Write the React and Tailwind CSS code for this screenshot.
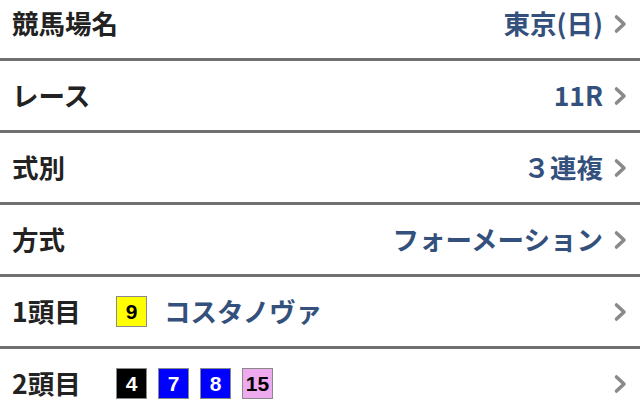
import React from "react";

const Chevron = () => (
  <svg width="15" height="20" viewBox="0 0 15 20" className="shrink-0">
    <path d="M3.5 3 L11 10 L3.5 17" fill="none" stroke="#8a8a8a" strokeWidth="3.6" strokeLinecap="round" strokeLinejoin="round" />
  </svg>
);

const Badge = ({ n, bg, fg }) => (
  <div
    className={`w-[31px] h-[31px] flex items-center justify-center border border-[#8a8a8a] text-[21px] font-bold leading-none ${bg} ${fg}`}
    style={{ fontFamily: '"Liberation Sans", Arial, sans-serif' }}
  >
    {n}
  </div>
);

const Row = ({ label, value, children }) => (
  <div className="h-[72px] flex items-center border-b-[3px] border-[#707070] pl-[12px] pr-[12px]">
    <div className="w-[104px] shrink-0 whitespace-nowrap text-[26.5px] font-bold text-[#222222] leading-none">{label}</div>
    <div className="flex-1 flex items-center min-w-0">{children}</div>
    {value && <div className="whitespace-nowrap text-[26.5px] font-bold text-[#34507c] leading-none mr-[10px]">{value}</div>}
    {!value && <div className="mr-[10px]" />}
    <Chevron />
  </div>
);

export default function App() {
  return (
    <div
      className="w-[640px] h-[400px] overflow-hidden bg-white"
      style={{ fontFamily: '"Noto Sans CJK JP", "Noto Sans", sans-serif' }}
    >
      <div className="-mt-[11px]">
        <Row label="競馬場名" value="東京(日)" />
        <Row label="レース" value="11R" />
        <Row label="式別" value="３連複" />
        <Row label="方式" value="フォーメーション" />
        <Row label="1頭目">
          <Badge n="9" bg="bg-[#ffff00]" fg="text-black" />
          <span className="ml-[17px] whitespace-nowrap text-[26.5px] font-bold text-[#34507c] leading-none">コスタノヴァ</span>
        </Row>
        <Row label="2頭目">
          <div className="flex items-center gap-[11px]">
            <Badge n="4" bg="bg-black" fg="text-white" />
            <Badge n="7" bg="bg-[#0000ff]" fg="text-white" />
            <Badge n="8" bg="bg-[#0000ff]" fg="text-white" />
            <Badge n="15" bg="bg-[#eeaaee]" fg="text-black" />
          </div>
        </Row>
      </div>
    </div>
  );
}
